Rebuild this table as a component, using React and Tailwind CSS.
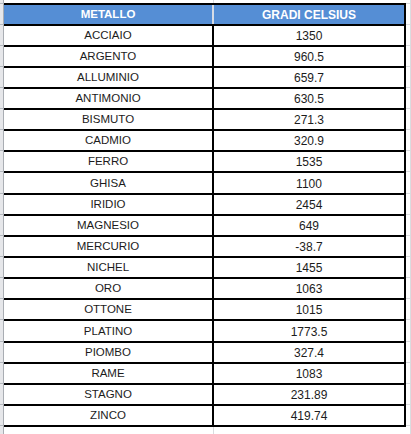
import React from 'react'

const METALS = [
  ['ACCIAIO', '1350'],
  ['ARGENTO', '960.5'],
  ['ALLUMINIO', '659.7'],
  ['ANTIMONIO', '630.5'],
  ['BISMUTO', '271.3'],
  ['CADMIO', '320.9'],
  ['FERRO', '1535'],
  ['GHISA', '1100'],
  ['IRIDIO', '2454'],
  ['MAGNESIO', '649'],
  ['MERCURIO', '-38.7'],
  ['NICHEL', '1455'],
  ['ORO', '1063'],
  ['OTTONE', '1015'],
  ['PLATINO', '1773.5'],
  ['PIOMBO', '327.4'],
  ['RAME', '1083'],
  ['STAGNO', '231.89'],
  ['ZINCO', '419.74'],
]

// rows that render one pixel taller (sheet row heights aren't all equal)
const TALL = new Set([7, 14])

function Strip({ tick }) {
  return (
    <div
      className={
        'w-[4px] shrink-0 border-r border-[#a9adb3] bg-[#e6e7ea] ' +
        (tick ? 'border-t border-t-[#b4b8be]' : '')
      }
    />
  )
}

function Line() {
  return (
    <div className="flex h-[2px]">
      <Strip tick />
      <div className="w-[402px] bg-black" />
      <div className="w-[5px] border-r border-t border-[#dadcdf]" />
    </div>
  )
}

function Filler({ h }) {
  return (
    <div className={`flex ${h}`}>
      <Strip />
      <div className="w-[210px] border-r border-[#dadcdf]" />
      <div className="w-[197px] border-r border-[#dadcdf]" />
    </div>
  )
}

function Row({ name, value, header, tall }) {
  const cell = header
    ? 'flex items-center justify-center bg-[#558ed5] pt-px font-bold text-white'
    : 'flex items-center justify-center pt-px'
  return (
    <div className={`flex ${tall ? 'h-[20px]' : 'h-[19px]'}`}>
      <Strip />
      <div className={`w-[208px] ${cell}`}>{name}</div>
      <div className={`w-[2px] ${header ? 'bg-[#d6dce6]' : 'bg-black'}`} />
      <div className={`w-[190px] ${cell} text-[12px]`}>{value}</div>
      <div className="w-[2px] bg-black" />
      <div className="w-[5px] border-r border-[#dadcdf]" />
    </div>
  )
}

export default function App() {
  return (
    <div className="h-[434px] w-[411px] overflow-hidden bg-white font-['Liberation_Sans',Arial,sans-serif] text-[11.5px] leading-none text-[#1c1c1c]">
      <Filler h="h-[3px]" />
      <Line />
      <Row name="METALLO" value="GRADI CELSIUS" header />
      <Line />
      {METALS.map(([name, value], i) => (
        <React.Fragment key={name}>
          <Row name={name} value={value} tall={TALL.has(i)} />
          <Line />
        </React.Fragment>
      ))}
      <Filler h="h-[7px]" />
    </div>
  )
}
